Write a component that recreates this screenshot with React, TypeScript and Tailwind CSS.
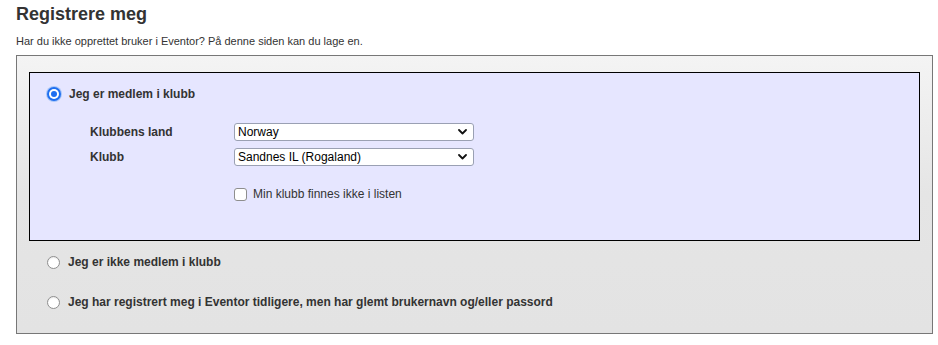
import React from "react";

const font = { fontFamily: '"Liberation Sans", Arial, sans-serif' };

function Radio({ checked }: { checked?: boolean }) {
  if (checked) {
    return (
      <span className="inline-flex h-[14px] w-[14px] items-center justify-center rounded-full bg-[#1f6ff0] shadow-[0_0_0_1px_#a9c6f8]">
        <span className="flex h-[10px] w-[10px] items-center justify-center rounded-full bg-white">
          <span className="h-[6px] w-[6px] rounded-full bg-[#1f6ff0]" />
        </span>
      </span>
    );
  }
  return <span className="inline-block h-[13px] w-[13px] rounded-full border border-[#8e8e8e] bg-white shadow-[inset_0_1px_1px_rgba(0,0,0,0.08)]" />;
}

function Select({ value }: { value: string }) {
  return (
    <div className="flex h-[18px] w-[240px] items-center justify-between rounded-[3px] border border-[#9aa0b3] bg-white pl-[3px] pr-[6px] text-[12px] leading-[14px] text-black">
      <span>{value}</span>
      <svg width="9" height="6" viewBox="0 0 9 6">
        <path d="M1 1 L4.5 4.5 L8 1" fill="none" stroke="#111" strokeWidth="1.8" strokeLinecap="round" strokeLinejoin="round" />
      </svg>
    </div>
  );
}

export default function App() {
  return (
    <div className="bg-white text-[#333] px-4 pb-3" style={font}>
      <h1 className="pt-[3px] text-[18px] font-bold leading-[22px] text-[#333]">Registrere meg</h1>
      <p className="mt-[10px] text-[11px] leading-[13px] text-[#333]">
        Har du ikke opprettet bruker i Eventor? På denne siden kan du lage en.
      </p>
      <div className="mt-[7px] h-[279px] w-[917px] border border-[#777] bg-gradient-to-b from-[#f4f4f4] via-[#e5e5e5] to-[#e3e3e3] px-[12px] pt-[16px] leading-[14px]">
        <div className="h-[169px] border border-black bg-[#e6e6ff] pl-[17px] pt-[14px]">
          <div className="flex items-center gap-[8px]">
            <Radio checked />
            <span className="text-[12px] font-bold">Jeg er medlem i klubb</span>
          </div>
          <div className="mt-[22px] pl-[43px]">
            <div className="flex h-[18px] items-center">
              <span className="w-[144px] text-[12px] font-bold">Klubbens land</span>
              <Select value="Norway" />
            </div>
            <div className="mt-[7px] flex h-[18px] items-center">
              <span className="w-[144px] text-[12px] font-bold">Klubb</span>
              <Select value="Sandnes IL (Rogaland)" />
            </div>
            <div className="mt-[21px] flex items-center pl-[144px]">
              <span className="inline-block h-[13px] w-[13px] rounded-[3px] border border-[#8e8e8e] bg-white" />
              <span className="ml-[6px] text-[12px]">Min klubb finnes ikke i listen</span>
            </div>
          </div>
        </div>
        <div className="mt-[14px] flex items-center gap-[8px] pl-[18px]">
          <Radio />
          <span className="text-[12px] font-bold">Jeg er ikke medlem i klubb</span>
        </div>
        <div className="mt-[26px] flex items-center gap-[8px] pl-[18px]">
          <Radio />
          <span className="text-[12px] font-bold">
            Jeg har registrert meg i Eventor tidligere, men har glemt brukernavn og/eller passord
          </span>
        </div>
      </div>
    </div>
  );
}
